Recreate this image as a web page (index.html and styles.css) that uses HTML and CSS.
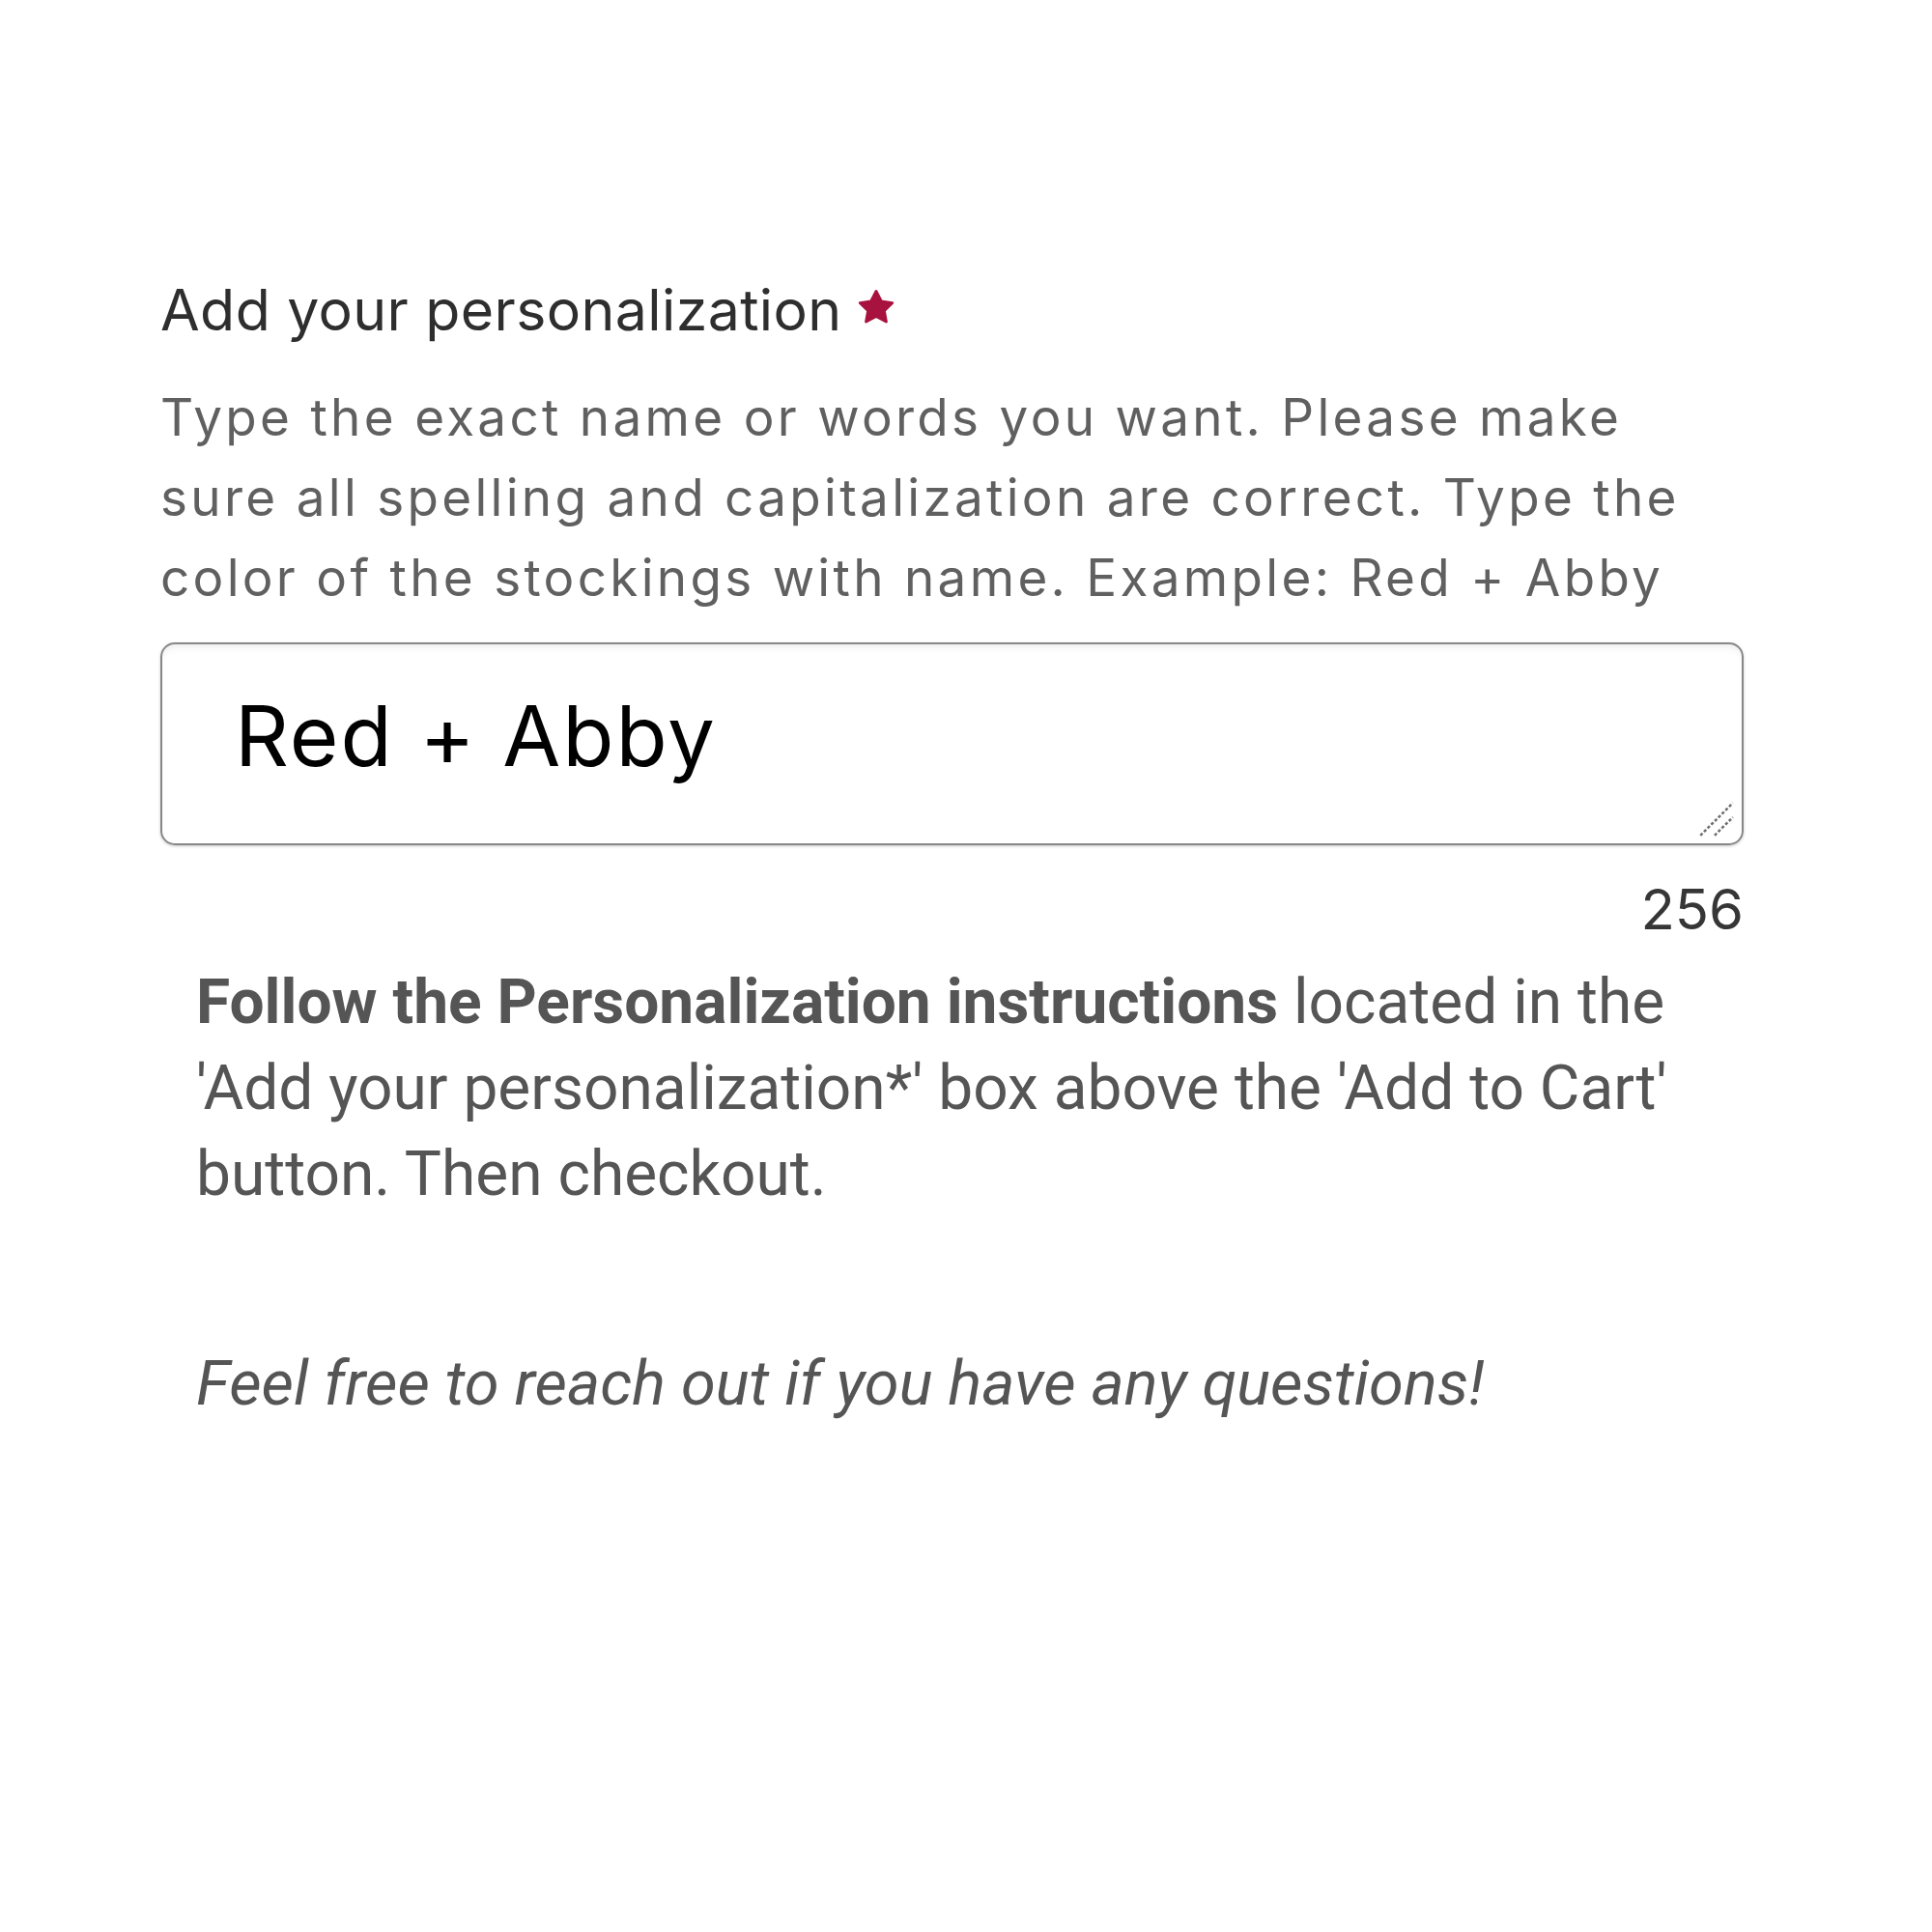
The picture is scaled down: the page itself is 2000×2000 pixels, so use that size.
FILE: index.html
```html
<!DOCTYPE html>
<html>
<head>
<meta charset="utf-8">
<link rel="stylesheet" href="styles.css">
</head>
<body>
<main class="page">
  <section class="personalize">
    <div class="label">Add your personalization<svg class="req" viewBox="0 0 24 24" width="38" height="38"><path d="M12 1.6L15.4 8.1L22.6 9.2L17.3 14.3L18.6 21.5L12 18L5.4 21.5L6.7 14.3L1.4 9.2L8.6 8.1Z" fill="#a8123e" stroke="#a8123e" stroke-width="1.8" stroke-linejoin="round"/></svg></div>
    <p class="desc">Type the exact name or words you want. Please make sure all spelling and capitalization are correct. Type the color of the stockings with name. Example: Red + Abby</p>
    <div class="field">
      <div class="value">Red + Abby</div>
      <svg class="grip" viewBox="0 0 40 40" width="42" height="42"><path d="M5 37L37 5M19 37L37 19" stroke="#6f6f6f" stroke-width="2.4" stroke-dasharray="3 2"/></svg>
    </div>
    <div class="count">256</div>
  </section>
  <section class="notes">
    <p class="follow"><strong>Follow the Personalization instructions</strong> located in the 'Add your personalization*' box above the 'Add to Cart' button. Then checkout.</p>
    <p class="closing">Feel free to reach out if you have any questions!</p>
  </section>
</main>
</body>
</html>
```
FILE: styles.css
```css
html, body {
  margin: 0;
  padding: 0;
  background: #ffffff;
}

.page {
  width: 2000px;
  height: 2000px;
  box-sizing: border-box;
  padding: 285px 195px 0 166px;
}

.personalize {
  display: flex;
  flex-direction: column;
}

.label {
  font-family: Inter, "Noto Sans", sans-serif;
  font-size: 59px;
  line-height: 72px;
  letter-spacing: 0.4px;
  color: #2e2e2e;
  display: flex;
  align-items: center;
  gap: 16px;
}

.req {
  margin-top: -6px;
}

.desc {
  margin: 34px 0 0 0;
  font-family: Inter, "Noto Sans", sans-serif;
  font-size: 53px;
  line-height: 83px;
  letter-spacing: 3.3px;
  color: #606060;
  width: 1600px;
}

.field {
  position: relative;
  margin-top: 25px;
  height: 210px;
  border: 2px solid #888888;
  border-radius: 15px;
  box-shadow: inset 0 7px 9px -5px rgba(0,0,0,0.09), 0 1px 3px rgba(0,0,0,0.22);
  padding: 40px 0 0 75px;
  box-sizing: border-box;
}

.value {
  font-family: Inter, "Noto Sans", sans-serif;
  font-size: 87px;
  line-height: 110px;
  color: #000;
  letter-spacing: 2px;
}

.grip {
  position: absolute;
  right: 6px;
  bottom: 5px;
}

.count {
  align-self: flex-end;
  margin-top: 34px;
  font-family: Inter, "Noto Sans", sans-serif;
  font-size: 58px;
  line-height: 64px;
  color: #363636;
}

.notes {
  padding-left: 37px;
  margin-top: 20px;
}

.follow {
  margin: 0;
  font-family: Roboto, "Liberation Sans", sans-serif;
  font-size: 64px;
  line-height: 89px;
  color: #555;
  width: 1620px;
}

.follow strong {
  font-weight: 700;
}

.closing {
  margin: 128px 0 0 0;
  font-family: Roboto, "Liberation Sans", sans-serif;
  font-style: italic;
  font-size: 65px;
  line-height: 89px;
  color: #555;
}
```
